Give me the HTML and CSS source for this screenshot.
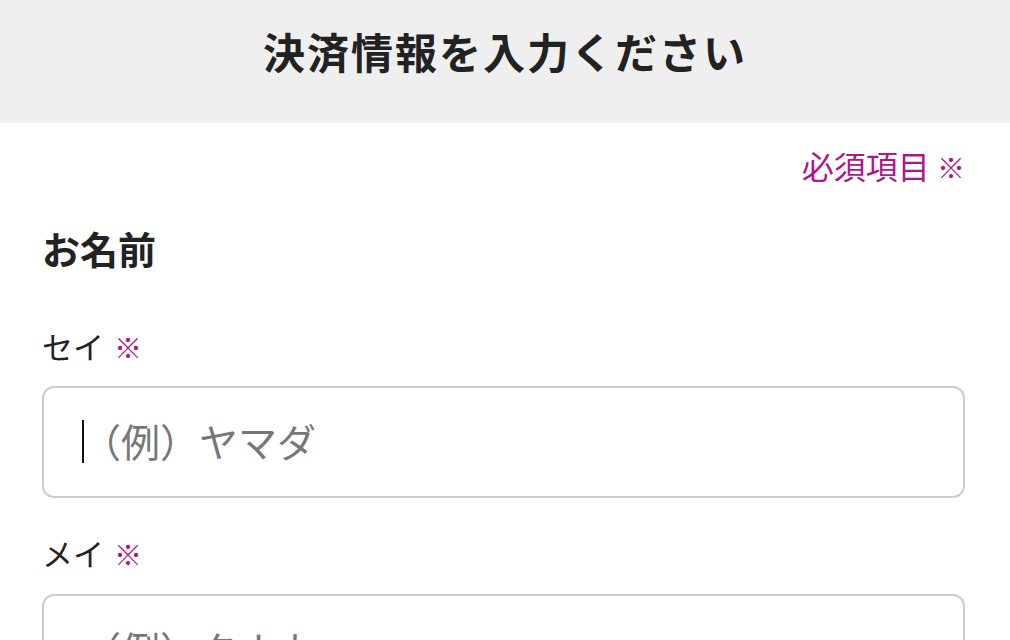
FILE: index.html
```html
<!DOCTYPE html>
<html lang="ja">
<head>
<meta charset="utf-8">
<title>決済情報を入力ください</title>
<link rel="stylesheet" href="styles.css">
</head>
<body>
<header class="page-header">
  <h1 class="page-title">決済情報を入力ください</h1>
</header>
<main class="form">
  <p class="required-note">必須項目 <span class="mark">※</span></p>
  <h2 class="section-title">お名前</h2>
  <label class="field-label" for="sei">セイ <span class="mark">※</span></label>
  <div class="input-wrap">
    <input class="text-input" id="sei" type="text" placeholder="（例）ヤマダ">
    <span class="caret"></span>
  </div>
  <label class="field-label field-label--next" for="mei">メイ <span class="mark">※</span></label>
  <div class="input-wrap">
    <input class="text-input" id="mei" type="text" placeholder="（例）タナカ">
  </div>
</main>
</body>
</html>
```

FILE: styles.css
```css
* { box-sizing: border-box; }
html, body {
  margin: 0;
  padding: 0;
  background: #ffffff;
  font-family: "Noto Sans CJK JP", "Noto Sans", sans-serif;
  color: #222222;
}
.page-header {
  height: 123px;
  background: #efefef;
  display: flex;
  align-items: center;
  justify-content: center;
}
.page-title {
  margin: 0;
  font-size: 42px;
  font-weight: 700;
  line-height: 1;
  letter-spacing: 2px;
  color: #222222;
  padding-bottom: 22px;
}
.form {
  padding: 0 45px 0 42px;
}
.required-note {
  margin: 22px 0 0;
  text-align: right;
  font-size: 32px;
  line-height: 40px;
  color: #b0168b;
}
.mark {
  color: #b0168b;
  font-size: 28px;
}
.field-label .mark {
  margin-left: 3px;
}
.section-title {
  margin: 41px 0 0;
  font-size: 38px;
  font-weight: 700;
  line-height: 40px;
}
.field-label {
  display: block;
  margin-top: 58px;
  font-size: 31px;
  line-height: 40px;
  color: #222222;
}
.field-label--next {
  margin-top: 35px;
}
.input-wrap {
  position: relative;
  margin-top: 19px;
}
.field-label--next + .input-wrap {
  margin-top: 20px;
}
.text-input {
  display: block;
  width: 100%;
  height: 112px;
  border: 2px solid #cccccc;
  border-radius: 12px;
  padding: 0 20px 4px 38px;
  font-family: "Noto Sans CJK JP", "Noto Sans", sans-serif;
  font-size: 39px;
  color: #222222;
  background: #ffffff;
  outline: none;
}
.text-input::placeholder {
  color: #777777;
}
.caret {
  position: absolute;
  left: 40px;
  top: 34px;
  width: 2px;
  height: 43px;
  background: #111111;
}
```
